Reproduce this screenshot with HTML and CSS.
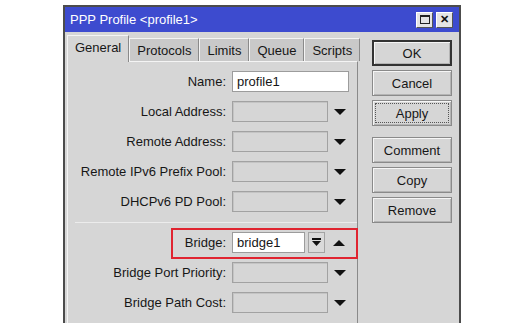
FILE: index.html
```html
<!DOCTYPE html>
<html lang="en">
<head>
    <meta charset="UTF-8">
    <title>PPP Profile</title>
    <link rel="stylesheet" href="styles.css">
</head>
<body>
    <div class="window">
        <div class="titlebar">
            <span class="title">PPP Profile &lt;profile1&gt;</span>
            <div class="title-btns">
                <span class="tbtn"><span class="max-icon"></span></span>
                <span class="tbtn close">&#x2715;</span>
            </div>
        </div>

        <div class="content">
            <div class="tabs-area">
                <div class="tabs">
                    <div class="tab active">General</div>
                    <div class="tab">Protocols</div>
                    <div class="tab">Limits</div>
                    <div class="tab">Queue</div>
                    <div class="tab">Scripts</div>
                </div>

                <div class="panel">
                    <div class="row">
                        <span class="label">Name:</span>
                        <div class="field white wide">profile1</div>
                    </div>
                    <div class="row">
                        <span class="label">Local Address:</span>
                        <div class="field"></div>
                        <span class="arrow down"></span>
                    </div>
                    <div class="row">
                        <span class="label">Remote Address:</span>
                        <div class="field"></div>
                        <span class="arrow down"></span>
                    </div>
                    <div class="row">
                        <span class="label">Remote IPv6 Prefix Pool:</span>
                        <div class="field"></div>
                        <span class="arrow down"></span>
                    </div>
                    <div class="row">
                        <span class="label">DHCPv6 PD Pool:</span>
                        <div class="field"></div>
                        <span class="arrow down"></span>
                    </div>

                    <div class="separator"></div>

                    <div class="row highlight">
                        <span class="label">Bridge:</span>
                        <div class="field white short">bridge1</div>
                        <span class="small-btn">
                            <svg width="9" height="9" viewBox="0 0 9 9">
                                <rect x="0" y="0" width="9" height="2" fill="#111"/>
                                <polygon points="0,3 9,3 4.5,8" fill="#111"/>
                            </svg>
                        </span>
                        <span class="arrow up"></span>
                    </div>
                    <div class="row">
                        <span class="label">Bridge Port Priority:</span>
                        <div class="field"></div>
                        <span class="arrow down"></span>
                    </div>
                    <div class="row">
                        <span class="label">Bridge Path Cost:</span>
                        <div class="field"></div>
                        <span class="arrow down"></span>
                    </div>
                </div>
            </div>

            <div class="buttons">
                <button class="btn default">OK</button>
                <button class="btn">Cancel</button>
                <button class="btn focus">Apply</button>
                <button class="btn spaced">Comment</button>
                <button class="btn">Copy</button>
                <button class="btn">Remove</button>
            </div>
        </div>
    </div>
</body>
</html>
```

FILE: styles.css
```css
* { margin: 0; padding: 0; box-sizing: border-box; }
body {
    background: #fff;
    font-family: 'Liberation Sans', Arial, sans-serif;
    font-size: 13px;
    color: #161616;
}
.window {
    margin: 5px 0 0 63px;
    width: 398px;
    height: 330px;
    background: #d6d6d6;
    border: 2px solid #4c4c4c;
    border-bottom: none;
}
.titlebar {
    height: 25px;
    background: #3d4bcf;
    display: flex;
    align-items: center;
    justify-content: space-between;
    padding: 0 6px 0 5px;
}
.title {
    color: #fff;
    font-size: 13px;
}
.title-btns {
    display: flex;
    gap: 3px;
}
.tbtn {
    width: 17px;
    height: 16px;
    background: #e4e4e4;
    border: 1px solid #fff;
    border-right-color: #555;
    border-bottom-color: #555;
    display: flex;
    align-items: center;
    justify-content: center;
    font-size: 11px;
    font-weight: bold;
    color: #111;
}
.max-icon {
    width: 10px;
    height: 9px;
    border: 1px solid #222;
    border-top-width: 2px;
}
.content {
    display: flex;
    padding: 3px 0 0 2px;
}
.tabs-area {
    width: 291px;
}
.tabs {
    display: flex;
    align-items: flex-end;
    height: 26px;
}
.tab {
    height: 23px;
    padding: 0 7px;
    display: flex;
    align-items: center;
    background: #c9c9c9;
    border: 1px solid #f4f4f4;
    border-right-color: #8a8a8a;
    border-bottom: none;
}
.tab.active {
    height: 27px;
    background: #d6d6d6;
    margin-bottom: -1px;
    position: relative;
    padding-bottom: 3px;
}
.panel {
    height: 270px;
    border: 1px solid #f4f4f4;
    border-right-color: #8a8a8a;
    display: flex;
    flex-direction: column;
    gap: 9px;
    padding-top: 9px;
}
.row {
    display: flex;
    align-items: center;
    height: 21px;
}
.label {
    width: 158px;
    text-align: right;
    margin-right: 6px;
}
.field {
    width: 96px;
    height: 21px;
    border: 1px solid #a2a2a2;
    background: #d6d6d6;
    padding: 2px 4px;
    box-shadow: inset 1px 1px 0 #c4c4c4;
}
.field.white {
    background: #fff;
    border-color: #9c9c9c;
    box-shadow: none;
}
.field.wide { width: 117px; }
.field.short { width: 73px; }
.arrow {
    width: 0;
    height: 0;
    margin-left: 6px;
    border-left: 6px solid transparent;
    border-right: 6px solid transparent;
}
.arrow.down { border-top: 6px solid #111; }
.arrow.up { border-bottom: 6px solid #111; margin-left: 8px; }
.separator {
    height: 1px;
    background: #bcbcbc;
    margin: 1px 0 0 7px;
    border-bottom: 1px solid #ececec;
}
.highlight {
    position: relative;
}
.highlight::after {
    content: '';
    position: absolute;
    left: 103px;
    right: -1px;
    top: -4px;
    bottom: -6px;
    border: 2px solid #e02430;
}
.small-btn {
    width: 17px;
    height: 21px;
    margin-left: 3px;
    background: #dadada;
    border: 1px solid #a4a4a4;
    display: flex;
    align-items: center;
    justify-content: center;
}
.buttons {
    margin: 5px 0 0 14px;
    width: 80px;
    display: flex;
    flex-direction: column;
    gap: 4px;
}
.btn {
    height: 26px;
    font-family: inherit;
    font-size: 13px;
    color: #161616;
    background: #d6d6d6;
    border: 1px solid #8a8a8a;
    box-shadow: inset 1px 1px 0 #f6f6f6, inset -1px -1px 0 #b4b4b4;
}
.btn.default {
    border: 2px solid #333;
}
.btn.focus {
    outline: 1px dotted #555;
    outline-offset: -4px;
}
.btn.spaced {
    margin-top: 7px;
}
```
